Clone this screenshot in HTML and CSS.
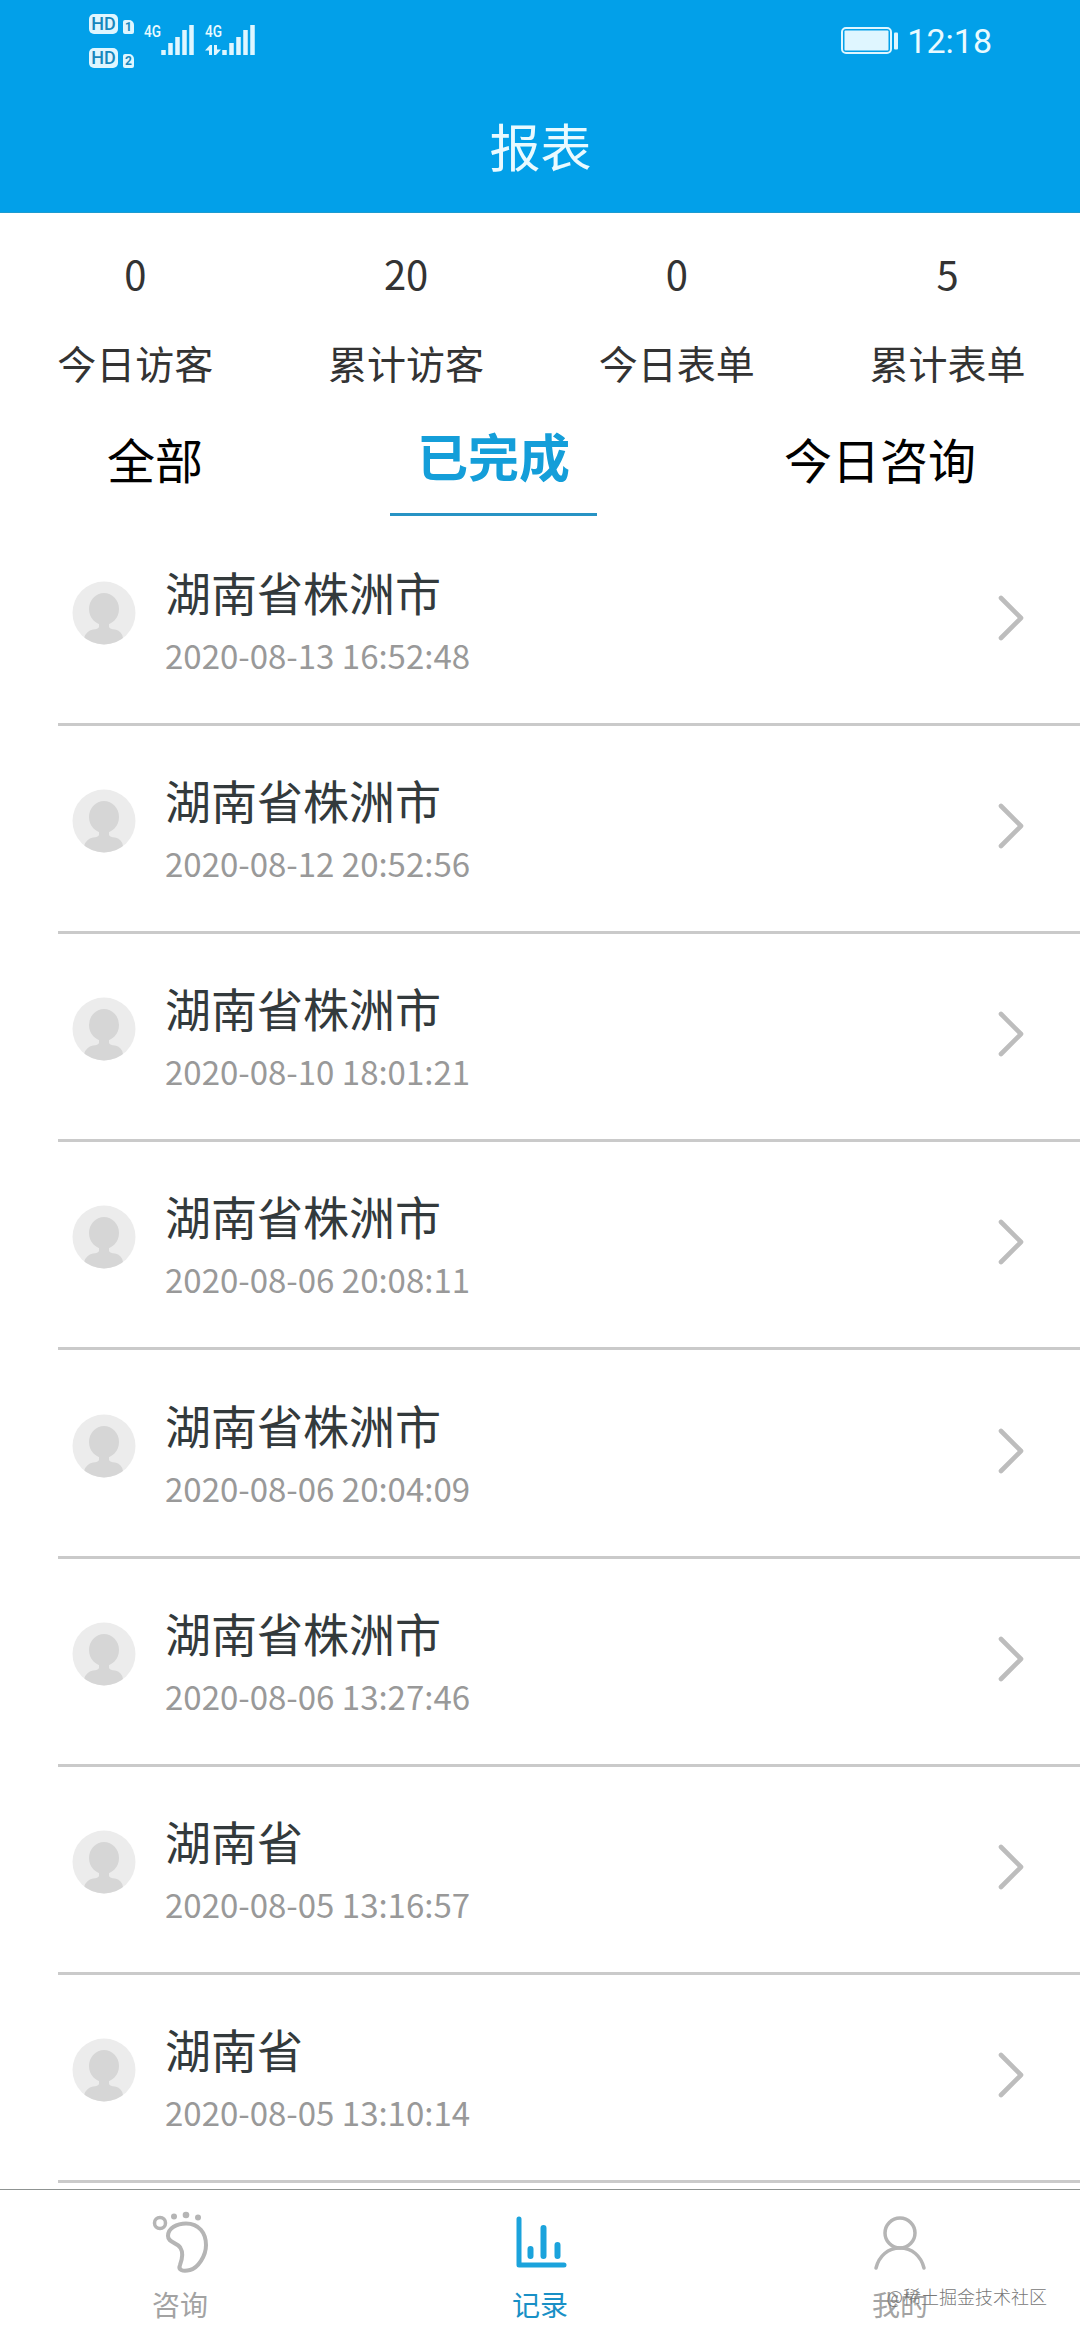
FILE: index.html
```html
<!DOCTYPE html>
<html lang="zh-CN">
<head>
<meta charset="utf-8">
<title>报表</title>
<link rel="stylesheet" href="styles.css">
</head>
<body>
<svg class="defs" width="0" height="0">
  <defs>
    <clipPath id="disc"><circle cx="32" cy="32" r="31.5"/></clipPath>
    <symbol id="avatar" viewBox="0 0 64 64">
      <circle cx="32" cy="32" r="31.5" fill="#ececec"/>
      <g clip-path="url(#disc)" fill="#d6d6d6">
        <ellipse cx="32" cy="28" rx="15" ry="16"/>
        <path d="M27 38H37V46Q38 48 43 48.500Q50 50 51 57L46 64H18L12 57Q14 50 21 48.500Q26 48 27 46Z"/>
      </g>
    </symbol>
    <symbol id="chevron" viewBox="0 0 28 48">
      <path d="M4 4L24 24L4 44" fill="none" stroke="#bdbdbd" stroke-width="4.6" stroke-linecap="round" stroke-linejoin="round"/>
    </symbol>
  </defs>
</svg>
<div class="screen">
  <header class="header">
    <div class="status">
      <div class="signals">
        <div class="sims">
          <div class="sim"><span class="hd">HD</span><span class="slot">1</span></div>
          <div class="sim"><span class="hd">HD</span><span class="slot">2</span></div>
        </div>
        <div class="signal">
          <span class="gen">4G</span>
          <svg class="bars" width="52" height="34" viewBox="0 0 52 34"><path d="M19.500 28V33M26.500 21V33M33.500 15V33M40.500 8V33M47.500 3V33"/></svg>
        </div>
        <div class="signal">
          <span class="gen">4G</span>
          <svg class="bars" width="52" height="34" viewBox="0 0 52 34"><path d="M19.500 28V33M26.500 21V33M33.500 15V33M40.500 8V33M47.500 3V33"/><path class="arrows" d="M0 28.500L5 23H7V33H4V28.500ZM9 23H12V27.500H16L11 33H9Z"/></svg>
        </div>
      </div>
      <div class="power">
        <svg width="60" height="30" viewBox="0 0 60 30"><rect x="2" y="2" width="49" height="25" rx="4" fill="none" stroke="#dff6ff" stroke-width="2"/><rect x="4.500" y="4.500" width="44" height="20" rx="1" fill="#dff6ff"/><rect x="54" y="6.500" width="4" height="17" rx="1" fill="#dff6ff"/></svg>
        <span class="clock">12:18</span>
      </div>
    </div>
    <h1 class="title">报表</h1>
  </header>

  <section class="stats">
    <div class="stat"><b>0</b><span>今日访客</span></div>
    <div class="stat"><b>20</b><span>累计访客</span></div>
    <div class="stat"><b>0</b><span>今日表单</span></div>
    <div class="stat"><b>5</b><span>累计表单</span></div>
  </section>

  <nav class="tabs">
    <span class="tab">全部</span>
    <span class="tab active">已完成</span>
    <span class="tab">今日咨询</span>
  </nav>

  <ul class="list">
    <li class="row"><svg class="avatar"><use href="#avatar"/></svg><div class="info"><p class="name">湖南省株洲市</p><p class="date">2020-08-13 16:52:48</p></div><svg class="chevron"><use href="#chevron"/></svg></li>
    <li class="row"><svg class="avatar"><use href="#avatar"/></svg><div class="info"><p class="name">湖南省株洲市</p><p class="date">2020-08-12 20:52:56</p></div><svg class="chevron"><use href="#chevron"/></svg></li>
    <li class="row"><svg class="avatar"><use href="#avatar"/></svg><div class="info"><p class="name">湖南省株洲市</p><p class="date">2020-08-10 18:01:21</p></div><svg class="chevron"><use href="#chevron"/></svg></li>
    <li class="row"><svg class="avatar"><use href="#avatar"/></svg><div class="info"><p class="name">湖南省株洲市</p><p class="date">2020-08-06 20:08:11</p></div><svg class="chevron"><use href="#chevron"/></svg></li>
    <li class="row"><svg class="avatar"><use href="#avatar"/></svg><div class="info"><p class="name">湖南省株洲市</p><p class="date">2020-08-06 20:04:09</p></div><svg class="chevron"><use href="#chevron"/></svg></li>
    <li class="row"><svg class="avatar"><use href="#avatar"/></svg><div class="info"><p class="name">湖南省株洲市</p><p class="date">2020-08-06 13:27:46</p></div><svg class="chevron"><use href="#chevron"/></svg></li>
    <li class="row"><svg class="avatar"><use href="#avatar"/></svg><div class="info"><p class="name">湖南省</p><p class="date">2020-08-05 13:16:57</p></div><svg class="chevron"><use href="#chevron"/></svg></li>
    <li class="row"><svg class="avatar"><use href="#avatar"/></svg><div class="info"><p class="name">湖南省</p><p class="date">2020-08-05 13:10:14</p></div><svg class="chevron"><use href="#chevron"/></svg></li>
  </ul>

  <footer class="tabbar">
    <div class="item">
      <svg width="64" height="64" viewBox="0 0 64 64" fill="none" stroke="#b5b5b5" stroke-width="4"><circle cx="12" cy="12" r="5.500" stroke-width="3.500"/><path d="M20 25C20 17 29 12.500 38 12.500C51 12.500 58 22 58 34C58 45 50 57 42 59C34 61 30 58.500 32 54C35 46 35 41 32.500 37C29 31 20 32 20 25Z"/><g fill="#b5b5b5" stroke="none"><circle cx="26" cy="5.500" r="3"/><circle cx="38" cy="4" r="3.300"/><circle cx="50" cy="6.500" r="3"/></g></svg>
      <span>咨询</span>
    </div>
    <div class="item current">
      <svg width="64" height="64" viewBox="0 0 64 64" fill="none" stroke="#1ba3dc" stroke-linecap="round" stroke-linejoin="round"><path d="M11 8V54H56" stroke-width="5"/><path d="M22.500 38V45M35.500 17V45M49.500 34V45" stroke-width="6"/></svg>
      <span>记录</span>
    </div>
    <div class="item">
      <svg width="64" height="64" viewBox="0 0 64 64" fill="none" stroke="#b5b5b5" stroke-width="3.500" stroke-linecap="round"><circle cx="32" cy="22" r="15"/><path d="M8 57C11 45 20 37 32 37S53 45 56 57"/></svg>
      <span>我的</span>
    </div>
    <div class="watermark">@稀土掘金技术社区</div>
  </footer>
</div>
</body>
</html>
```
FILE: styles.css
```css
* { box-sizing: border-box; margin: 0; padding: 0; }

body {
  background: #fff;
  font-family: "Noto Sans CJK SC", sans-serif;
  color: #333;
}

.defs { position: absolute; }

.screen {
  display: flex;
  flex-direction: column;
  width: 1080px;
  height: 2340px;
  overflow: hidden;
}

.header {
  height: 213px;
  background: #02a0e9;
  border-bottom: 1px solid #1c9bd0;
  color: #e9faff;
}

.status {
  display: flex;
  justify-content: space-between;
  height: 80px;
  padding: 0 88px 0 89px;
}

.signals { display: flex; gap: 9px; padding-top: 14px; }
.sims { display: flex; flex-direction: column; gap: 14px; margin-right: 1px; }
.sim { display: flex; align-items: flex-end; gap: 5px; height: 20px; }

.hd {
  width: 29px;
  height: 20px;
  border-radius: 5px;
  background: #dff6ff;
  color: #1687bd;
  font: 500 18px/20px Roboto, sans-serif;
  text-align: center;
}

.slot {
  width: 11px;
  height: 14px;
  border-radius: 2px 5px 2px 2px;
  background: #dff6ff;
  color: #1687bd;
  font: 700 12px/14px Roboto, sans-serif;
  text-align: center;
}

.signal { position: relative; width: 52px; padding-top: 8px; }
.gen {
  position: absolute;
  left: 0;
  top: 9px;
  font: 500 17px/17px Roboto, sans-serif;
  transform: scaleX(.8);
  transform-origin: left;
}
.bars { display: block; stroke: #dff6ff; stroke-width: 4.500; }
.arrows { fill: #dff6ff; stroke: none; }

.power { display: flex; align-items: center; gap: 7px; height: 81px; }
.clock { font: 400 34px/40px Roboto, sans-serif; }

.title {
  font-size: 51px;
  line-height: 60px;
  font-weight: 400;
  text-align: center;
  padding: 35px 0 0 1px;
}

.stats {
  display: grid;
  grid-template-columns: repeat(4, 1fr);
  width: 1083px;
  height: 198px;
  padding-top: 31px;
}
.stat { display: flex; flex-direction: column; align-items: center; }
.stat b { font-size: 40px; line-height: 58px; font-weight: 400; }
.stat span { font-size: 39px; line-height: 56px; margin-top: 32px; }

.tabs { display: flex; justify-content: space-around; width: 1083px; height: 105px; }
.tab {
  height: 105px;
  padding: 17px 27px 0;
  font-size: 48px;
  line-height: 60px;
  color: #000;
}
.tab.active {
  padding-top: 14px;
  border-bottom: 3px solid #2793c4;
  color: #149ed9;
  font-size: 51px;
  font-weight: 700;
}

.list { list-style: none; height: 1673px; overflow: hidden; }
.row {
  display: flex;
  align-items: flex-end;
  height: 208.170px;
  margin-left: 58px;
  padding: 0 55px 44px 14px;
  border-bottom: 3px solid #cacaca;
}
.row:first-child { height: 210px; }
.avatar { width: 64px; height: 64px; margin-bottom: 34px; }
.info { flex: 1; padding-left: 29px; }
.name { font-size: 46px; line-height: 66px; color: #333a3c; }
.date { font-size: 33px; line-height: 48px; color: #999; margin-top: 7px; }
.chevron { width: 28px; height: 48px; margin-bottom: 37px; }

.tabbar {
  position: relative;
  display: grid;
  grid-template-columns: repeat(3, 1fr);
  flex: 1;
  border-top: 1px solid #8f9492;
}
.item { display: flex; flex-direction: column; align-items: center; padding-top: 21px; color: #a3a3a3; }
.item span { font-size: 28px; line-height: 40px; margin-top: 9px; }
.item.current { color: #1990c6; }

.watermark {
  position: absolute;
  right: 33px;
  bottom: 30px;
  font-size: 18px;
  font-weight: 300;
  line-height: 28px;
  color: #777;
}
```
